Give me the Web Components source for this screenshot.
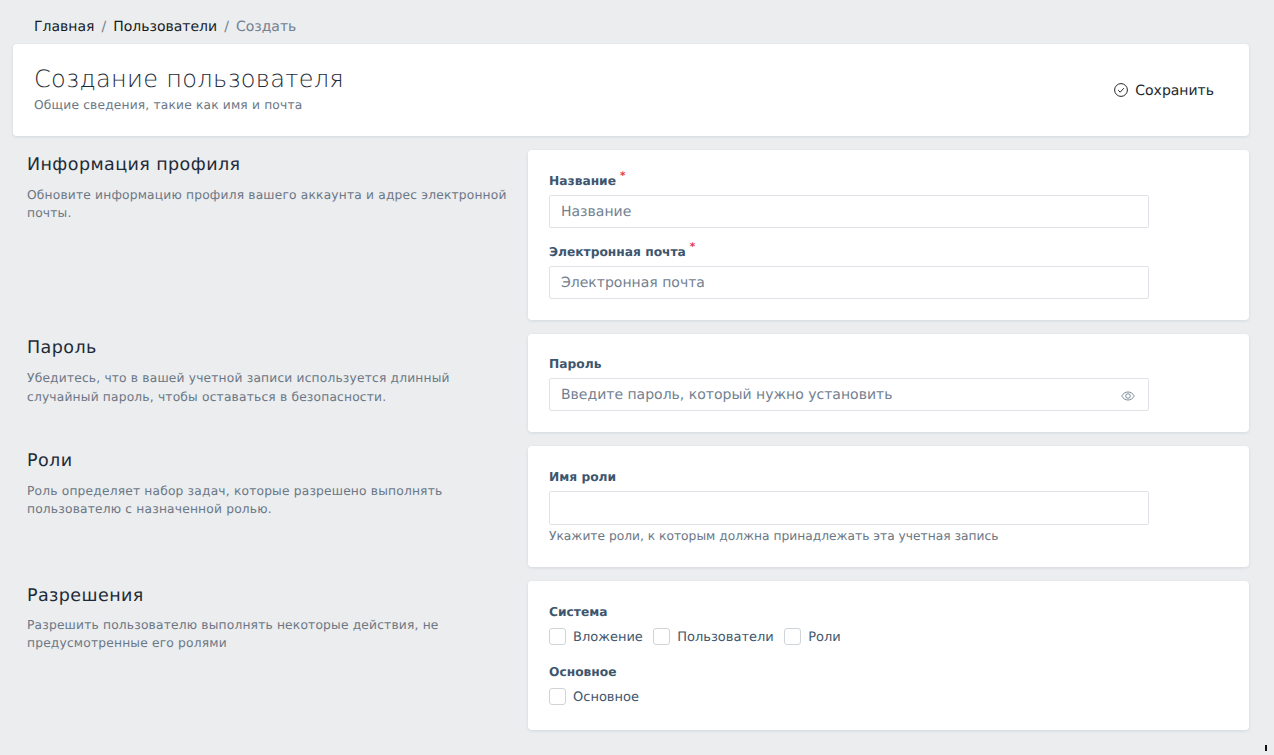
<!DOCTYPE html>
<html lang="ru">
<head>
<meta charset="utf-8">
<title>Создание пользователя</title>
<style>
    html, body { margin: 0; height: 755px; overflow: hidden; background: #ebedef; }
    body { font-family: "DejaVu Sans", sans-serif; color: #1e2b37; text-rendering: geometricPrecision; }
    app-page { height: 755px; }
    .cursor { position: fixed; left: 1265px; top: 745px; width: 2px; height: 6px; background: #111; }
</style>
</head>
<body>
<template id="checkbox-tpl">
    <style>
        :host { display: inline-flex; align-items: flex-start; height: 17px; }
        .box { width: 15px; height: 15px; border: 1px solid #cfd4d9; border-radius: 3px; background: #fff; margin-right: 7px; }
        .text { font-size: 13px; line-height: 19px; color: #43586c; }
    </style>
    <span class="box"></span><span class="text"><slot></slot></span>
</template>

<app-page>
    <bread-crumbs>
        <a>Главная</a>
        <a>Пользователи</a>
        <span>Создать</span>
    </bread-crumbs>
    <page-header heading="Создание пользователя" sub="Общие сведения, такие как имя и почта"></page-header>

    <form-section heading="Информация профиля" text="Обновите информацию профиля вашего аккаунта и адрес электронной почты." style="--h:170px">
        <form-field label="Название" placeholder="Название" required></form-field>
        <form-field label="Электронная почта" placeholder="Электронная почта" required></form-field>
    </form-section>

    <form-section heading="Пароль" text="Убедитесь, что в вашей учетной записи используется длинный случайный пароль, чтобы оставаться в безопасности." style="--h:98px;--pt:20px;--it:3.3px">
        <form-field label="Пароль" placeholder="Введите пароль, который нужно установить" eye></form-field>
    </form-section>

    <form-section heading="Роли" text="Роль определяет набор задач, которые разрешено выполнять пользователю с назначенной ролью." style="--h:121px;--ih:34px">
        <form-field label="Имя роли" hint="Укажите роли, к которым должна принадлежать эта учетная запись"></form-field>
    </form-section>

    <form-section heading="Разрешения" text="Разрешить пользователю выполнять некоторые действия, не предусмотренные его ролями" style="--h:149px;--pm:-1px">
        <check-group label="Система">
            <check-box>Вложение</check-box>
            <check-box>Пользователи</check-box>
            <check-box>Роли</check-box>
        </check-group>
        <check-group label="Основное">
            <check-box>Основное</check-box>
        </check-group>
    </form-section>
</app-page>
<div class="cursor"></div>

<script>
class AppPage extends HTMLElement {
    constructor() {
        super();
        this.attachShadow({ mode: 'open' });
    }

    connectedCallback() {
        this.shadowRoot.innerHTML = `
            <style>
                :host {
                    display: flex;
                    flex-direction: column;
                    gap: 14px;
                    padding: 0 25px 0 13px;
                }
            </style>
            <slot></slot>
        `;
    }
}

class BreadCrumbs extends HTMLElement {
    constructor() {
        super();
        this.attachShadow({ mode: 'open' });
    }

    connectedCallback() {
        const items = [...this.children].map((el, i, all) => {
            const last = i === all.length - 1;
            return `<span class="${last ? 'current' : 'link'}">${el.textContent}</span>` + (last ? '' : '<span class="sep">/</span>');
        }).join('');
        this.shadowRoot.innerHTML = `
            <style>
                :host {
                    display: block;
                    height: 44px;
                    margin-bottom: -14px;
                    box-sizing: border-box;
                    padding: 18px 0 0 21px;
                    font-size: 14px;
                    line-height: 18px;
                }
                .link { color: #181b1e; }
                .current { color: #73818f; }
                .sep { color: #73818f; margin: 0 7px; }
            </style>
            ${items}
        `;
    }
}

class PageHeader extends HTMLElement {
    constructor() {
        super();
        this.attachShadow({ mode: 'open' });
    }

    connectedCallback() {
        this.shadowRoot.innerHTML = `
            <style>
                :host {
                    display: flex;
                    align-items: center;
                    justify-content: space-between;
                    height: 92px;
                    box-sizing: border-box;
                    padding: 0 35px 0 21px;
                    background: #fff;
                    border-radius: 4px;
                    box-shadow: 0 1px 3px rgba(60,75,100,.12);
                }
                h1 {
                    margin: -3px 0 3px;
                    font-size: 24px;
                    line-height: 30px;
                    font-weight: 200;
                    letter-spacing: .33px;
                    color: #1e2b37;
                }
                p {
                    margin: 0;
                    font-size: 12.25px;
                    line-height: 16px;
                    letter-spacing: .17px;
                    color: #6b7785;
                }
                .save {
                    display: flex;
                    align-items: center;
                    gap: 7px;
                    font-size: 14px;
                    color: #23282c;
                }
                .save span { padding-top: 2px; }
                svg { display: block; }
            </style>
            <div>
                <h1>${this.getAttribute('heading')}</h1>
                <p>${this.getAttribute('sub')}</p>
            </div>
            <div class="save">
                <svg width="14" height="14" viewBox="0 0 14 14" fill="none" stroke="#23282c" stroke-width="1">
                    <circle cx="7" cy="7" r="6.4"/>
                    <path d="M4.2 7.2l2 2 3.6-4"/>
                </svg>
                <span>Сохранить</span>
            </div>
        `;
    }
}

class FormSection extends HTMLElement {
    constructor() {
        super();
        this.attachShadow({ mode: 'open' });
    }

    connectedCallback() {
        this.shadowRoot.innerHTML = `
            <style>
                :host {
                    display: grid;
                    grid-template-columns: 515px 721px;
                    height: var(--h);
                }
                .info { padding: var(--it, 4px) 14px 0 14px; }
                h2 {
                    margin: 0 0 9px;
                    font-size: 17.5px;
                    line-height: 23px;
                    font-weight: 400;
                    letter-spacing: .42px;
                    color: #1e2b37;
                }
                p {
                    margin: var(--pm, 0) 0 0;
                    font-size: 12.25px;
                    line-height: 18.4px;
                    letter-spacing: .18px;
                    color: #6b7785;
                }
                .card {
                    box-sizing: border-box;
                    display: flex;
                    flex-direction: column;
                    gap: 14px;
                    padding: var(--pt, 21px) 21px 0;
                    background: #fff;
                    border-radius: 4px;
                    box-shadow: 0 1px 3px rgba(60,75,100,.12);
                }
            </style>
            <div class="info">
                <h2>${this.getAttribute('heading')}</h2>
                <p>${this.getAttribute('text')}</p>
            </div>
            <div class="card"><slot></slot></div>
        `;
    }
}

class FormField extends HTMLElement {
    constructor() {
        super();
        this.attachShadow({ mode: 'open' });
    }

    connectedCallback() {
        const placeholder = this.getAttribute('placeholder') || '';
        const hint = this.getAttribute('hint');
        this.shadowRoot.innerHTML = `
            <style>
                :host { display: block; width: 600px; }
                label {
                    display: block;
                    height: 24px;
                    box-sizing: border-box;
                    padding-top: 1px;
                    font-size: 12.25px;
                    line-height: 18px;
                    font-weight: 700;
                    color: #3d566e;
                }
                sup {
                    position: absolute;
                    margin: -2px 0 0 4px;
                    font-size: 10.5px;
                    line-height: 12px;
                    font-weight: 700;
                    color: #dc3545;
                }
                .input {
                    display: flex;
                    align-items: center;
                    justify-content: space-between;
                    height: var(--ih, 33px);
                    box-sizing: border-box;
                    padding: 0 13px 0 11px;
                    background: #fff;
                    border: 1px solid #dfe3e7;
                    border-radius: 2px;
                    font-size: 14px;
                    color: #73818f;
                }
                .hint {
                    margin-top: 3px;
                    font-size: 12.25px;
                    line-height: 17px;
                    color: #6b7785;
                }
                svg { display: block; margin-top: 3px; }
            </style>
            <label>${this.getAttribute('label')}${this.hasAttribute('required') ? '<sup>*</sup>' : ''}</label>
            <div class="input">
                <span>${placeholder}</span>
                ${this.hasAttribute('eye') ? `<svg width="14" height="10" viewBox="0 0 14 10" fill="none" stroke="#73818f" stroke-width=".9"><path d="M.7 5C2.300 2.300 4.500 1 7 1s4.700 1.300 6.300 4C11.700 7.700 9.500 9 7 9S2.300 7.700.7 5z"/><circle cx="7" cy="5" r="2.300"/></svg>` : ''}
            </div>
            ${hint ? `<div class="hint">${hint}</div>` : ''}
        `;
    }
}

class CheckGroup extends HTMLElement {
    constructor() {
        super();
        this.attachShadow({ mode: 'open' });
    }

    connectedCallback() {
        this.shadowRoot.innerHTML = `
            <style>
                :host { display: block; height: 46px; }
                .title {
                    height: 26px;
                    padding-top: 1px;
                    box-sizing: border-box;
                    font-size: 12.25px;
                    line-height: 18px;
                    font-weight: 700;
                    color: #3d566e;
                }
                .row { display: flex; gap: 10.4px; }
            </style>
            <div class="title">${this.getAttribute('label')}</div>
            <div class="row"><slot></slot></div>
        `;
    }
}

class CheckBox extends HTMLElement {
    constructor() {
        super();
        this.attachShadow({ mode: 'open' }).appendChild(document.getElementById('checkbox-tpl').content.cloneNode(true));
    }
}

customElements.define('app-page', AppPage);
customElements.define('bread-crumbs', BreadCrumbs);
customElements.define('page-header', PageHeader);
customElements.define('form-section', FormSection);
customElements.define('form-field', FormField);
customElements.define('check-group', CheckGroup);
customElements.define('check-box', CheckBox);
</script>
</body>
</html>
